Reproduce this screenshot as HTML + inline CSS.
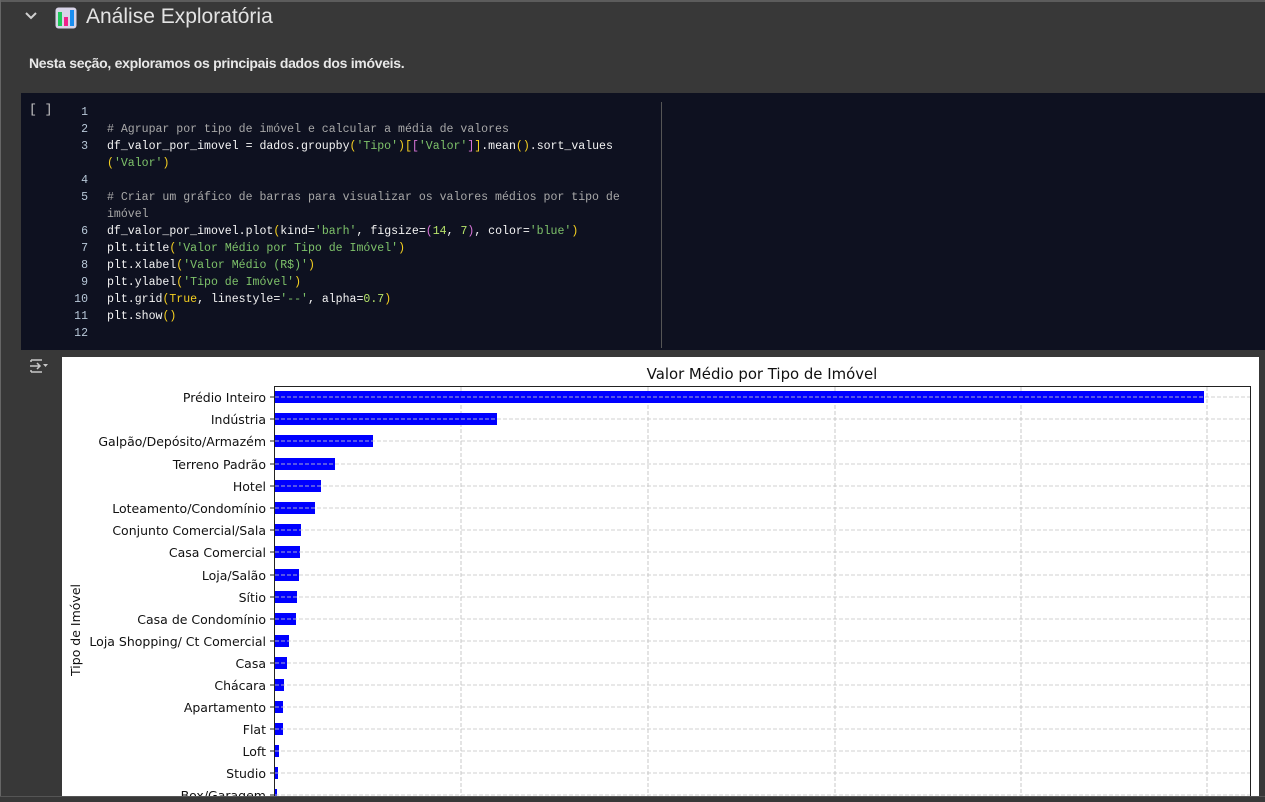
<!DOCTYPE html>
<html><head><meta charset="utf-8">
<style>
html,body{margin:0;padding:0;}
body{width:1265px;height:797px;background:#383838;position:relative;overflow:hidden;font-family:"Liberation Sans",sans-serif;}
.bt{position:absolute;left:0;top:0;width:1265px;height:2px;background:#5c5c5c;}
.bl{position:absolute;left:0;top:0;width:1px;height:797px;background:#666;}
.bb{position:absolute;left:0;top:796px;width:1265px;height:1px;background:#555;}
h1{position:absolute;left:86px;top:5px;margin:0;font-weight:normal;font-size:21px;color:#e3e3e3;}
.chev{position:absolute;left:24px;top:11px;}
.icon{position:absolute;left:55px;top:7px;}
.desc{position:absolute;left:29px;top:55px;font-size:14px;color:#e8e8e8;font-weight:bold;letter-spacing:-0.3px}
.code{position:absolute;left:21px;top:93px;width:1244px;height:257px;background:#0e1120;}
.ruler{position:absolute;left:661px;top:102px;width:1px;height:246px;background:#555;}
.br{position:absolute;left:29px;top:102px;font-family:"Liberation Mono",monospace;font-size:13px;color:#c8c8c8;}
pre{position:absolute;left:0;top:104px;margin:0;font-family:"Liberation Mono",monospace;font-size:11.55px;line-height:17px;color:#f4f4f4;}
.ln{position:absolute;left:60px;width:28px;text-align:right;color:#b8c8d8;}
.tx{position:absolute;left:107px;white-space:pre;}
.c{color:#a8a8a8}.s{color:#7ec26a}.y{color:#f5d020}.p{color:#d774d7}.n{color:#b6e36a}.k{color:#f5d020}
.out{position:absolute;left:62px;top:357px;width:1197px;height:440px;background:#fff;}
.oi{position:absolute;left:29px;top:358px;}
</style></head><body>
<div class="bt"></div><div class="bl"></div>
<svg class="chev" width="14" height="10" viewBox="0 0 14 10"><path d="M2 2 L7 7 L12 2" stroke="#d0d0d0" stroke-width="2" fill="none"/></svg>
<svg class="icon" width="22" height="22" viewBox="0 0 22 22"><rect x="0.5" y="0.5" width="21" height="21" rx="3" fill="#d8d4e8"/><rect x="3" y="5" width="4" height="14" fill="#1ec85a"/><rect x="9" y="10" width="4" height="9" fill="#f0208a"/><rect x="15" y="3" width="4" height="16" fill="#1a8ef0"/></svg>
<h1>Análise Exploratória</h1>
<div class="desc">Nesta seção, exploramos os principais dados dos imóveis.</div>
<div class="code"></div>
<div class="ruler"></div>
<div class="br">[ ]</div>
<pre>
<span class="ln" style="top:0">1</span>
<span class="ln" style="top:17px">2</span><span class="tx c" style="top:17px"># Agrupar por tipo de imóvel e calcular a média de valores</span>
<span class="ln" style="top:34px">3</span><span class="tx" style="top:34px">df_valor_por_imovel = dados.groupby<span class="y">(</span><span class="s">'Tipo'</span><span class="y">)</span><span class="y">[</span><span class="p">[</span><span class="s">'Valor'</span><span class="p">]</span><span class="y">]</span>.mean<span class="y">()</span>.sort_values</span>
<span class="tx" style="top:51px"><span class="y">(</span><span class="s">'Valor'</span><span class="y">)</span></span>
<span class="ln" style="top:68px">4</span>
<span class="ln" style="top:85px">5</span><span class="tx c" style="top:85px"># Criar um gráfico de barras para visualizar os valores médios por tipo de</span>
<span class="tx c" style="top:102px">imóvel</span>
<span class="ln" style="top:119px">6</span><span class="tx" style="top:119px">df_valor_por_imovel.plot<span class="y">(</span>kind=<span class="s">'barh'</span>, figsize=<span class="p">(</span><span class="n">14</span>, <span class="n">7</span><span class="p">)</span>, color=<span class="s">'blue'</span><span class="y">)</span></span>
<span class="ln" style="top:136px">7</span><span class="tx" style="top:136px">plt.title<span class="y">(</span><span class="s">'Valor Médio por Tipo de Imóvel'</span><span class="y">)</span></span>
<span class="ln" style="top:153px">8</span><span class="tx" style="top:153px">plt.xlabel<span class="y">(</span><span class="s">'Valor Médio (R$)'</span><span class="y">)</span></span>
<span class="ln" style="top:170px">9</span><span class="tx" style="top:170px">plt.ylabel<span class="y">(</span><span class="s">'Tipo de Imóvel'</span><span class="y">)</span></span>
<span class="ln" style="top:187px">10</span><span class="tx" style="top:187px">plt.grid<span class="y">(</span><span class="k">True</span>, linestyle=<span class="s">'--'</span>, alpha=<span class="n">0.7</span><span class="y">)</span></span>
<span class="ln" style="top:204px">11</span><span class="tx" style="top:204px">plt.show<span class="y">()</span></span>
<span class="ln" style="top:221px">12</span>
</pre>
<svg class="oi" width="20" height="16" viewBox="0 0 20 16"><path d="M2 2 H13 M2 14 H13 M2 2 V4 M2 14 V12 M1 8 H11 M8 5 L11 8 L8 11" stroke="#c8c8c8" stroke-width="1.5" fill="none"/><path d="M14 6 L19 6 L16.5 9 Z" fill="#c8c8c8"/></svg>
<div class="out">
<svg width="1197" height="440" viewBox="62 357 1197 440" style="font-family:'DejaVu Sans',sans-serif">
<text x="762" y="379" font-size="14.9" text-anchor="middle" fill="#111">Valor Médio por Tipo de Imóvel</text>
<g stroke="#c8c8c8" stroke-dasharray="4,2" stroke-width="1">
<line x1="461" y1="387" x2="461" y2="797"/><line x1="648" y1="387" x2="648" y2="797"/><line x1="835" y1="387" x2="835" y2="797"/><line x1="1021" y1="387" x2="1021" y2="797"/><line x1="1207" y1="387" x2="1207" y2="797"/>
</g>
<g font-size="12.5" fill="#111" text-anchor="end">
<text x="266" y="402">Prédio Inteiro</text>
<text x="266" y="424">Indústria</text>
<text x="266" y="446">Galpão/Depósito/Armazém</text>
<text x="266" y="469">Terreno Padrão</text>
<text x="266" y="491">Hotel</text>
<text x="266" y="513">Loteamento/Condomínio</text>
<text x="266" y="535">Conjunto Comercial/Sala</text>
<text x="266" y="557">Casa Comercial</text>
<text x="266" y="580">Loja/Salão</text>
<text x="266" y="602">Sítio</text>
<text x="266" y="624">Casa de Condomínio</text>
<text x="266" y="646">Loja Shopping/ Ct Comercial</text>
<text x="266" y="668">Casa</text>
<text x="266" y="690">Chácara</text>
<text x="266" y="712">Apartamento</text>
<text x="266" y="734">Flat</text>
<text x="266" y="756">Loft</text>
<text x="266" y="778">Studio</text>
<text x="266" y="800">Box/Garagem</text>
</g>
<text transform="translate(80,630) rotate(-90)" font-size="12.5" text-anchor="middle" fill="#111">Tipo de Imóvel</text>
<g fill="#0000ff">
<rect x="275" y="391" width="929" height="12"/>
<rect x="275" y="413" width="222" height="12"/>
<rect x="275" y="435" width="98" height="12"/>
<rect x="275" y="458" width="60" height="12"/>
<rect x="275" y="480" width="46" height="12"/>
<rect x="275" y="502" width="40" height="12"/>
<rect x="275" y="524" width="26" height="12"/>
<rect x="275" y="546" width="25" height="12"/>
<rect x="275" y="569" width="24" height="12"/>
<rect x="275" y="591" width="22" height="12"/>
<rect x="275" y="613" width="21" height="12"/>
<rect x="275" y="635" width="14" height="12"/>
<rect x="275" y="657" width="12" height="12"/>
<rect x="275" y="679" width="9" height="12"/>
<rect x="275" y="701" width="8" height="12"/>
<rect x="275" y="723" width="8" height="12"/>
<rect x="275" y="745" width="4" height="12"/>
<rect x="275" y="767" width="3" height="12"/>
<rect x="275" y="789" width="2" height="12"/>
</g>
<g stroke="#c8c8c8" stroke-dasharray="4,2" stroke-width="1" opacity="0.85">
<line x1="275" y1="397" x2="1250" y2="397"/><line x1="275" y1="419" x2="1250" y2="419"/><line x1="275" y1="441" x2="1250" y2="441"/><line x1="275" y1="464" x2="1250" y2="464"/><line x1="275" y1="486" x2="1250" y2="486"/><line x1="275" y1="508" x2="1250" y2="508"/><line x1="275" y1="530" x2="1250" y2="530"/><line x1="275" y1="552" x2="1250" y2="552"/><line x1="275" y1="575" x2="1250" y2="575"/><line x1="275" y1="597" x2="1250" y2="597"/><line x1="275" y1="619" x2="1250" y2="619"/><line x1="275" y1="641" x2="1250" y2="641"/><line x1="275" y1="663" x2="1250" y2="663"/><line x1="275" y1="685" x2="1250" y2="685"/><line x1="275" y1="707" x2="1250" y2="707"/><line x1="275" y1="729" x2="1250" y2="729"/><line x1="275" y1="751" x2="1250" y2="751"/><line x1="275" y1="773" x2="1250" y2="773"/><line x1="275" y1="795" x2="1250" y2="795"/>
</g>
<g stroke="#222" stroke-width="1">
<line x1="270" y1="397" x2="274" y2="397"/><line x1="270" y1="419" x2="274" y2="419"/><line x1="270" y1="441" x2="274" y2="441"/><line x1="270" y1="464" x2="274" y2="464"/><line x1="270" y1="486" x2="274" y2="486"/><line x1="270" y1="508" x2="274" y2="508"/><line x1="270" y1="530" x2="274" y2="530"/><line x1="270" y1="552" x2="274" y2="552"/><line x1="270" y1="575" x2="274" y2="575"/><line x1="270" y1="597" x2="274" y2="597"/><line x1="270" y1="619" x2="274" y2="619"/><line x1="270" y1="641" x2="274" y2="641"/><line x1="270" y1="663" x2="274" y2="663"/><line x1="270" y1="685" x2="274" y2="685"/><line x1="270" y1="707" x2="274" y2="707"/><line x1="270" y1="729" x2="274" y2="729"/><line x1="270" y1="751" x2="274" y2="751"/><line x1="270" y1="773" x2="274" y2="773"/><line x1="270" y1="795" x2="274" y2="795"/>
</g>
<rect x="274.5" y="386.5" width="976" height="420" fill="none" stroke="#222" stroke-width="1"/>
</svg>
</div>
<div class="bb"></div>
</body></html>
